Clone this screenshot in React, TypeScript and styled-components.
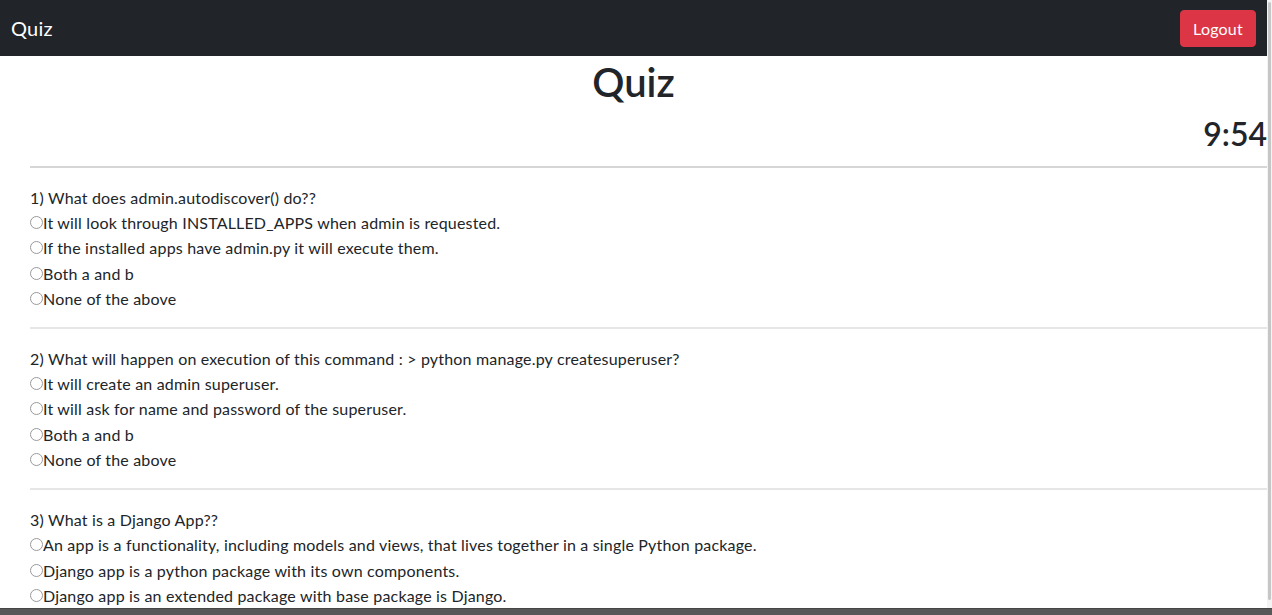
import React from "react";
import styled, { createGlobalStyle } from "styled-components";

const GlobalStyle = createGlobalStyle`
  html, body { margin: 0; padding: 0; overflow: hidden; }
  body {
    font-family: Lato, "Noto Sans", "Liberation Sans", sans-serif;
    color: #212529;
    background: #fff;
  }
  * { box-sizing: border-box; }
`;

const Screen = styled.div`
  width: 1272px;
  height: 615px;
  display: flex;
  flex-direction: column;
  overflow: hidden;
`;

const Viewport = styled.div`
  flex: 1;
  min-height: 0;
  display: flex;
  overflow: hidden;
`;

const Page = styled.div`
  flex: 1;
  min-width: 0;
  display: flex;
  flex-direction: column;
  overflow: hidden;
`;

const ScrollTrack = styled.div`
  width: 5px;
  background: #f4f4f4;
  display: flex;
  justify-content: flex-end;
  padding: 2px 1px 8px 1px;
`;

const ScrollThumb = styled.div`
  width: 3px;
  flex: 1;
  background: #c6c6c6;
  border-radius: 2px;
`;

const TaskBar = styled.div`
  flex: none;
  height: 7px;
  background: #585858;
  border-top: 1px solid #464646;
`;

const Navbar = styled.nav`
  flex: none;
  height: 56px;
  background: #212529;
  display: flex;
  align-items: center;
  justify-content: space-between;
  padding: 0 11px 0 11px;
`;

const Brand = styled.span`
  color: #fff;
  font-size: 20px;
  line-height: 30px;
  letter-spacing: 0.2px;
`;

const LogoutButton = styled.button`
  background: #dc3545;
  color: #fff;
  border: 1px solid #dc3545;
  border-radius: 4px;
  font-family: inherit;
  font-size: 16px;
  line-height: 24px;
  letter-spacing: 0.2px;
  padding: 6px 12px;
  height: 37px;
  width: 76px;
  margin-top: 1px;
`;

const Main = styled.main`
  flex: none;
  display: flex;
  flex-direction: column;
`;

const Title = styled.h1`
  margin: 2px 0 0 0;
  font-size: 40px;
  line-height: 48px;
  font-weight: 600;
  text-align: center;
`;

const Timer = styled.h2`
  margin: 9px 0 0 0;
  font-size: 32px;
  line-height: 38px;
  font-weight: 600;
  text-align: right;
`;

const QuizForm = styled.form`
  padding-left: 30px;
  display: flex;
  flex-direction: column;
`;

const Rule = styled.hr<{ $first?: boolean }>`
  border: 0;
  height: 2px;
  background: ${(p) => (p.$first ? "#d6d6d6" : "#e6e6e6")};
  margin: ${(p) => (p.$first ? "13px" : "16px")} 0 16.5px 0;
`;

const Question = styled.div`
  display: flex;
  flex-direction: column;
`;

const Line = styled.div`
  height: 25.33px;
  line-height: 25.33px;
  font-size: 16px;
  letter-spacing: 0.18px;
  white-space: nowrap;
`;

const Option = styled.label`
  height: 25.33px;
  display: flex;
  align-items: center;
  font-size: 16px;
  letter-spacing: 0.18px;
  white-space: nowrap;
`;

const Radio = styled.input`
  appearance: none;
  -webkit-appearance: none;
  width: 13px;
  height: 13px;
  margin: 0;
  border: 1px solid #9a9a9a;
  border-radius: 50%;
  background: #fff;
  flex: none;
`;

const questions = [
  {
    q: "1) What does admin.autodiscover() do??",
    opts: [
      "It will look through INSTALLED_APPS when admin is requested.",
      "If the installed apps have admin.py it will execute them.",
      "Both a and b",
      "None of the above",
    ],
  },
  {
    q: "2) What will happen on execution of this command : > python manage.py createsuperuser?",
    opts: [
      "It will create an admin superuser.",
      "It will ask for name and password of the superuser.",
      "Both a and b",
      "None of the above",
    ],
  },
  {
    q: "3) What is a Django App??",
    opts: [
      "An app is a functionality, including models and views, that lives together in a single Python package.",
      "Django app is a python package with its own components.",
      "Django app is an extended package with base package is Django.",
      "None of the above",
    ],
  },
];

export default function App() {
  return (
    <Screen>
      <GlobalStyle />
      <Viewport>
        <Page>
          <Navbar>
            <Brand>Quiz</Brand>
            <LogoutButton>Logout</LogoutButton>
          </Navbar>
          <Main>
            <Title>Quiz</Title>
            <Timer>9:54</Timer>
            <QuizForm>
              {questions.map((item, i) => (
                <React.Fragment key={i}>
                  <Rule $first={i === 0} />
                  <Question>
                    <Line>{item.q}</Line>
                    {item.opts.map((o, j) => (
                      <Option key={j}>
                        <Radio type="radio" name={`q${i}`} />
                        {o}
                      </Option>
                    ))}
                  </Question>
                </React.Fragment>
              ))}
            </QuizForm>
          </Main>
        </Page>
        <ScrollTrack>
          <ScrollThumb />
        </ScrollTrack>
      </Viewport>
      <TaskBar />
    </Screen>
  );
}
